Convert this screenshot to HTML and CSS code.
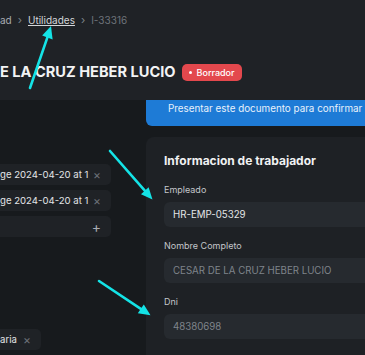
FILE: index.html
```html
<!DOCTYPE html>
<html lang="es">
<head>
    <meta charset="UTF-8">
    <meta name="viewport" content="width=device-width, initial-scale=1.0">
    <title>I-33316</title>
    <link rel="stylesheet" href="styles.css">
</head>
<body>
    <header class="page-head">
        <nav class="crumbs">
            <span>ad</span>
            <span class="sep">&rsaquo;</span>
            <a href="#">Utilidades</a>
            <span class="sep">&rsaquo;</span>
            <span class="current">I-33316</span>
        </nav>
        <div class="title-row">
            <h1>E LA CRUZ HEBER LUCIO</h1>
            <span class="badge"><span class="dot"></span>Borrador</span>
        </div>
    </header>

    <main class="layout">
        <aside class="sidebar">
            <div class="attachments">
                <div class="chip"><span>ge 2024-04-20 at 1</span><span class="x">&times;</span></div>
                <div class="chip"><span>ge 2024-04-20 at 1</span><span class="x">&times;</span></div>
                <div class="chip"><span></span><span class="plus">+</span></div>
            </div>
            <div class="tags">
                <div class="chip small"><span>aria</span><span class="x">&times;</span></div>
            </div>
        </aside>

        <section class="content">
            <div class="notice">Presentar este documento para confirmar</div>
            <div class="card">
                <h2>Informacion de trabajador</h2>
                <div class="field">
                    <label>Empleado</label>
                    <div class="input">HR-EMP-05329</div>
                </div>
                <div class="field">
                    <label>Nombre Completo</label>
                    <div class="input muted">CESAR DE LA CRUZ HEBER LUCIO</div>
                </div>
                <div class="field">
                    <label>Dni</label>
                    <div class="input muted">48380698</div>
                </div>
            </div>
        </section>
    </main>

    <!-- flechas de anotacion -->
    <svg class="marks" width="365" height="355" viewBox="0 0 365 355">
        <g stroke="#14e3e6" stroke-width="2.6" stroke-linecap="round" fill="#14e3e6">
            <line x1="30" y1="88" x2="47.4" y2="37.4"/>
            <polygon stroke="none" points="51,26 52.6,39.4 42.2,35.6"/>
            <line x1="110" y1="151" x2="144.8" y2="190.7"/>
            <polygon stroke="none" points="152.5,199.5 141,194.2 148.6,187.2"/>
            <line x1="99" y1="281" x2="140.8" y2="308.9"/>
            <polygon stroke="none" points="150.5,315.3 137.8,313.2 143.8,304.6"/>
        </g>
    </svg>
</body>
</html>
```

FILE: styles.css
```css
* {
    box-sizing: border-box;
}

body {
    margin: 0;
    width: 365px;
    height: 355px;
    overflow: hidden;
    position: relative;
    background-color: #171a1d;
    color: #e9eaec;
    font-family: Inter, "Noto Sans", sans-serif;
}

/* En-tete */
.page-head {
    height: 100px;
    background-color: #1f2226;
    padding-top: 13px;
}

.crumbs {
    display: flex;
    align-items: center;
    gap: 6px;
    height: 14px;
    font-size: 10px;
    color: #a8acb2;
}

.crumbs a {
    color: #d4d6d9;
    text-decoration: underline;
}

.crumbs .sep {
    color: #7d8288;
    font-size: 11px;
}

.crumbs .current {
    color: #6e737a;
}

.title-row {
    display: flex;
    align-items: center;
    gap: 6px;
    margin-top: 36px;
}

h1 {
    margin: 0;
    font-size: 14.6px;
    font-weight: 700;
    line-height: 18px;
    color: #f2f3f4;
}

.badge {
    display: flex;
    align-items: center;
    gap: 5px;
    height: 17px;
    padding: 0 7px;
    border-radius: 5px;
    background-color: #e3484d;
    color: #fff;
    font-size: 9px;
    font-weight: 500;
}

.dot {
    width: 3px;
    height: 3px;
    border-radius: 50%;
    background-color: #fff;
}

/* Contenu */
.layout {
    display: flex;
    gap: 35px;
}

.sidebar {
    width: 111px;
    flex: none;
    padding-top: 64px;
}

.attachments {
    display: flex;
    flex-direction: column;
    gap: 5px;
}

.chip {
    display: flex;
    align-items: center;
    justify-content: space-between;
    height: 21px;
    padding-right: 10px;
    border-radius: 0 5px 5px 0;
    background-color: #1f2226;
    font-size: 9.6px;
    color: #e2e4e6;
}

.chip .x {
    color: #6b7077;
    font-size: 12px;
}

.chip .plus {
    color: #a9adb3;
    font-size: 14px;
}

.tags {
    margin-top: 90px;
}

.chip.small {
    display: inline-flex;
    gap: 6px;
}

.content {
    flex: 1;
    min-width: 0;
}

.notice {
    height: 26px;
    padding: 2px 0 0 22px;
    border-radius: 0 0 0 6px;
    background-color: #1e7bd6;
    color: #e8f1fb;
    font-size: 9.85px;
    white-space: nowrap;
}

.card {
    margin-top: 11px;
    min-height: 230px;
    padding: 15px 0 0 18px;
    border-radius: 8px 0 0 0;
    background-color: #1e2125;
}

.card h2 {
    margin: 0 0 13px;
    font-size: 12px;
    font-weight: 700;
    line-height: 18px;
    color: #f0f1f2;
}

.field {
    margin-bottom: 12px;
}

.field label {
    display: block;
    margin-bottom: 5px;
    font-size: 9px;
    line-height: 14px;
    color: #c3c6ca;
}

.input {
    display: flex;
    align-items: center;
    height: 25px;
    padding-left: 9px;
    border-radius: 6px 0 0 6px;
    background-color: #262a2f;
    font-size: 9.7px;
    color: #e3e5e7;
    white-space: nowrap;
}

.input.muted {
    color: #7f848b;
}

.marks {
    position: absolute;
    top: 0;
    left: 0;
    pointer-events: none;
}
```
